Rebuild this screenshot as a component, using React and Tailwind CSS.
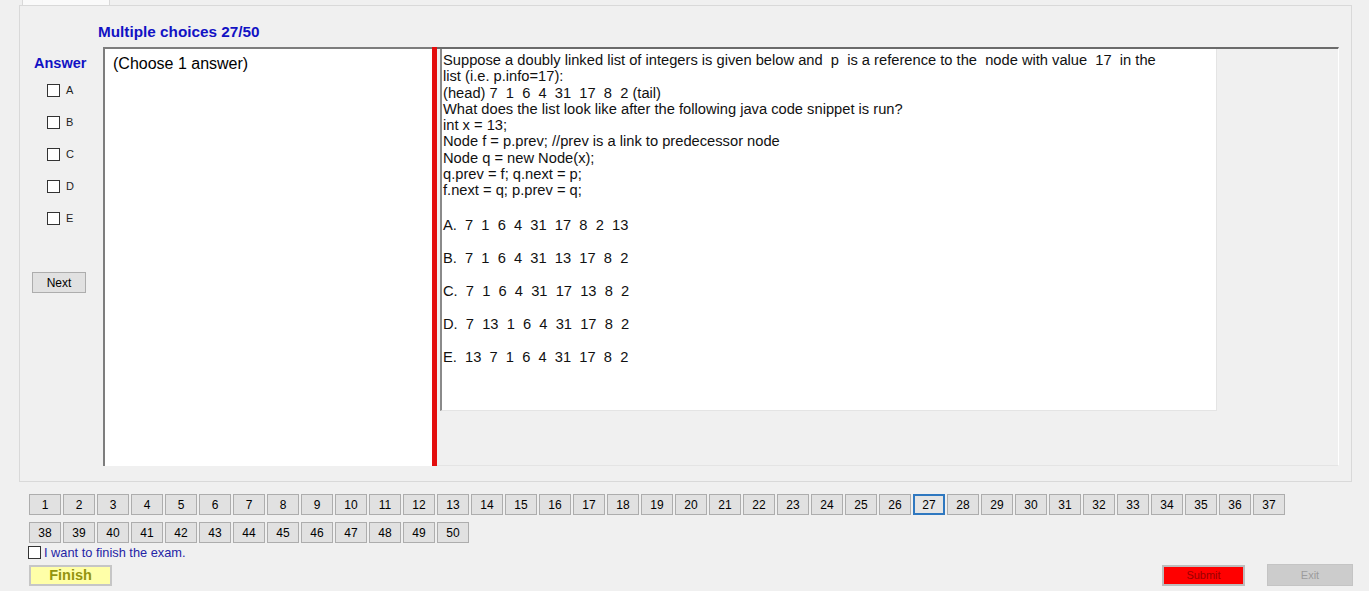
import React from "react";

const questionLines = [
  "Suppose a doubly linked list of integers is given below and  p  is a reference to the  node with value  17  in the",
  "list (i.e. p.info=17):",
  "(head) 7  1  6  4  31  17  8  2 (tail)",
  "What does the list look like after the following java code snippet is run?",
  "int x = 13;",
  "Node f = p.prev; //prev is a link to predecessor node",
  "Node q = new Node(x);",
  "q.prev = f; q.next = p;",
  "f.next = q; p.prev = q;",
];

const options = [
  "A.  7  1  6  4  31  17  8  2  13",
  "B.  7  1  6  4  31  13  17  8  2",
  "C.  7  1  6  4  31  17  13  8  2",
  "D.  7  13  1  6  4  31  17  8  2",
  "E.  13  7  1  6  4  31  17  8  2",
];

const letters = ["A", "B", "C", "D", "E"];
const current = 27;

function Box() {
  return <div className="w-[13px] h-[13px] border border-[#333333] bg-white shrink-0" />;
}

export default function App() {
  const numbers = Array.from({ length: 50 }, (_, i) => i + 1);

  return (
    <div className="w-[1372px] h-[594px] bg-white font-['Liberation_Sans',Arial,sans-serif] text-black">
      <div className="w-[1369px] h-[591px] bg-[#f0f0f0] flex flex-col">
        {/* tab strip */}
        <div className="h-[5px] flex">
          <div className="ml-[22px] w-[88px] h-full bg-[#fafafa] border-x border-[#d9d9d9]" />
        </div>

        {/* tab page */}
        <div className="ml-[19px] w-[1333px] h-[477px] border border-[#d9d9d9] flex flex-col">
          <div className="mt-[18px] pl-[78px] h-[16px] leading-[16px] text-[15.3px] font-bold text-[#1212c4]">
            Multiple choices 27/50
          </div>

          <div className="mt-[7px] flex h-[419px]">
            {/* answer column */}
            <div className="w-[83px] flex flex-col pt-[8px]">
              <div className="pl-[14px] text-[14.5px] leading-[16px] font-bold text-[#1212c4]">Answer</div>
              <div className="mt-[13px] flex flex-col gap-[19px] pl-[27px]">
                {letters.map((l) => (
                  <div key={l} className="flex items-center h-[13px]">
                    <Box />
                    <span className="ml-[6px] text-[11px] text-[#222222]">{l}</span>
                  </div>
                ))}
              </div>
              <button className="mt-[47px] ml-[12px] w-[54px] h-[21px] bg-[#e1e1e1] border border-[#adadad] text-[12px] leading-none">
                Next
              </button>
            </div>

            {/* choose box */}
            <div className="w-[329px] h-full bg-white border-t-2 border-l-2 border-[#7d7d7d] pl-[8px] pt-[6px]">
              <div className="text-[16px] leading-[18px]">(Choose 1 answer)</div>
            </div>

            {/* red separator */}
            <div className="w-[5px] h-full bg-[#e30e0e]" />

            {/* question panel */}
            <div className="w-[902px] h-full border-t-2 border-[#6b6b6b] border-r border-r-white border-b border-b-[#e4e4e4] pl-[3px] flex">
              <div className="w-[777px] h-[362px] bg-white border-l-2 border-[#8a8a8a] border-b border-b-[#e4e4e4] border-r border-r-[#e4e4e4] pl-[1px] pt-[3px] text-[14.7px] text-[#111111]">
                {questionLines.map((line, i) => (
                  <div key={i} className="leading-[16.3px] whitespace-pre">
                    {line}
                  </div>
                ))}
                <div className="h-[18.5px]" />
                {options.map((opt) => (
                  <div key={opt} className="leading-[16.5px] mb-[16.5px] whitespace-pre">
                    {opt}
                  </div>
                ))}
              </div>
            </div>
          </div>
        </div>

        {/* navigation */}
        <div className="mt-[12px] pl-[29px] flex flex-col">
          <div className="w-[1257px] flex flex-wrap gap-x-[2px] gap-y-[7px]">
            {numbers.map((n) => (
              <button
                key={n}
                className={
                  n === current
                    ? "w-[32px] h-[21px] bg-[#e5e5e5] border-2 border-[#2f78c0] text-[12px] leading-none"
                    : "w-[32px] h-[21px] bg-[#e1e1e1] border border-[#adadad] text-[12px] leading-none"
                }
              >
                {n}
              </button>
            ))}
          </div>

          <div className="mt-[3px] -ml-[1px] flex items-center h-[13px]">
            <Box />
            <span className="ml-[3px] text-[12.8px] text-[#2424a6]">I want to finish the exam.</span>
          </div>

          <div className="mt-[6px] w-[1324px] flex items-start">
            <button className="w-[83px] h-[21px] bg-[#ffffa8] border-2 border-[#c6c6c6] text-[14.5px] font-bold text-[#94940e] leading-none">
              Finish
            </button>
            <button className="ml-auto w-[83px] h-[21px] bg-[#ff0000] border-2 border-[#bdbdbd] text-[11px] text-[#9a0000] leading-none">
              Submit
            </button>
            <button className="ml-[22px] -mt-[1px] w-[86px] h-[22px] bg-[#cccccc] border border-[#c4c4c4] text-[11px] text-[#9c9c9c] leading-none">
              Exit
            </button>
          </div>
        </div>
      </div>
    </div>
  );
}
